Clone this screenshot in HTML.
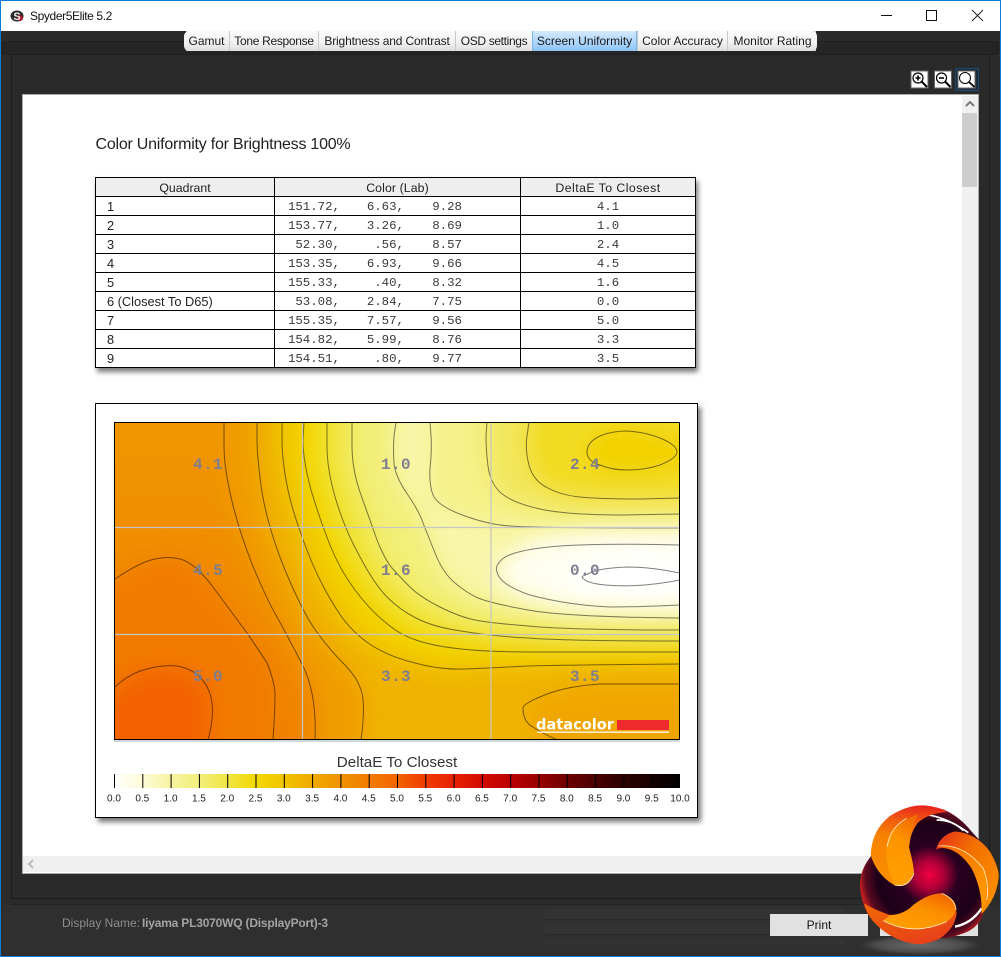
<!DOCTYPE html>
<html><head><meta charset="utf-8"><title>Spyder5Elite 5.2</title>
<style>
html,body{margin:0;padding:0}
body{width:1001px;height:957px;position:relative;overflow:hidden;background:#2b2b2b;font-family:"Liberation Sans",sans-serif;color:#111}
.a{position:absolute}
.tab{position:absolute;top:31px;height:20px;line-height:20px;font-size:12px;text-align:center;background:linear-gradient(#fbfbfb,#f2f2f2 55%,#dedede);color:#1a1a1a;box-sizing:border-box;white-space:nowrap}
table{position:absolute;left:95px;top:177px;width:600px;border-collapse:collapse;table-layout:fixed;background:#fff;box-shadow:2px 4px 5px #777;font-size:12px}
td,th{border:1px solid #000;height:16px;padding:2px 0 0 0;line-height:16px;font-weight:normal;color:#222}
th{background:#eee;text-align:center;font-size:12.300px}
td.q{padding-left:11px;font-size:12.800px}
td.m,td.d{font-family:"Liberation Mono",monospace;font-size:12.400px;color:#3a3a3a}
td.d{text-align:center}
td.m b{display:inline-block;font-weight:normal;text-align:right;white-space:pre}
td.m b:nth-child(1){width:65px}
td.m b:nth-child(2){width:64px}
td.m b:nth-child(3){width:58px}
</style></head><body>

<!-- title bar -->
<div class="a" style="left:0;top:0;width:1001px;height:31px;background:#fff"></div>
<svg class="a" style="left:9px;top:8px" width="16" height="16" viewBox="0 0 16 16"><ellipse cx="8" cy="8" rx="6.500" ry="5.500" fill="#2a2a2a"/><circle cx="11" cy="10" r="3" fill="#a01525"/><text x="8" y="12" font-size="11" font-weight="bold" fill="#eee" text-anchor="middle" font-family="Liberation Sans">S</text></svg>
<div class="a" style="left:30px;top:8px;font-size:12px;line-height:16px;color:#111;letter-spacing:-.38px">Spyder5Elite 5.2</div>
<svg class="a" style="left:870px;top:0" width="131" height="31"><path d="M11 15.500H22" stroke="#111" fill="none"/><rect x="56.500" y="10.500" width="10" height="10" stroke="#111" fill="none"/><path d="M102 10L113 21M113 10L102 21" stroke="#222" fill="none"/></svg>

<!-- dark frame -->
<div class="a" style="left:2px;top:41px;width:997px;height:14px;background:#252525;border:1px solid #1f1f1f;border-radius:3px;box-sizing:border-box"></div>
<div class="a" style="left:11px;top:55px;width:979px;height:844px;border:1px solid #1c1c1c;border-top:0;box-sizing:border-box;background:#2a2a2a"></div>
<div class="a" style="left:11px;top:899px;width:979px;height:6px;border-bottom:1px solid #222;box-sizing:border-box"></div>
<div class="a" style="left:0;top:905px;width:1001px;height:52px;background:#2f2f2f"></div>
<div class="a" style="left:545px;top:909px;width:300px;height:35px;background:repeating-linear-gradient(#333 0 10px,#292929 10px 11px,#2f2f2f 11px 15px)"></div>

<!-- tabs -->
<div class="a" style="left:186px;top:31px;width:630px;height:20px;background:#c9c9c9"></div>
<div class="tab" style="left:184px;width:45px;border-radius:5px 0 0 5px">Gamut</div>
<div class="tab" style="left:230px;width:88px;letter-spacing:-.3px">Tone Response</div>
<div class="tab" style="left:319px;width:136px;letter-spacing:-.15px">Brightness and Contrast</div>
<div class="tab" style="left:456px;width:76px;letter-spacing:-.35px">OSD settings</div>
<div class="tab" style="left:532px;width:105px;background:linear-gradient(#d5e9fd,#aed6fb 55%,#8ec4f7);border-left:1px solid #7ab5ee;border-right:1px solid #7ab5ee">Screen Uniformity</div>
<div class="tab" style="left:638px;width:89px">Color Accuracy</div>
<div class="tab" style="left:728px;width:89px;border-radius:0 5px 5px 0">Monitor Rating</div>

<!-- zoom buttons -->
<div class="a" style="left:955px;top:68px;width:24px;height:23px;border:1px solid #1b4a72;box-sizing:border-box;background:#1f2d3a"></div>
<svg class="a" style="left:910px;top:70px" width="70" height="20">
<g fill="#fff" stroke="#666"><rect x="1" y="1" width="17" height="17"/><rect x="24.500" y="1" width="17" height="17"/><rect x="48" y="1" width="17" height="17"/></g>
<g fill="none" stroke="#000" stroke-width="1.200"><circle cx="8" cy="8" r="5"/><path d="M11.500 11.500L17 17" stroke-width="2"/><path d="M5.500 8H10.500M8 5.500V10.500" stroke-width="1.600"/>
<circle cx="31.500" cy="8" r="5"/><path d="M35 11.500L40.500 17" stroke-width="2"/><path d="M29 8H34" stroke-width="1.600"/>
<circle cx="55" cy="8" r="5.500" stroke-width="1"/><path d="M59 12L64.500 17" stroke-width="1.800"/></g></svg>

<!-- content box -->
<div class="a" style="left:22px;top:94px;width:957px;height:780px;background:#fff;border:1px solid #aaa;box-sizing:border-box"></div>
<div class="a" style="left:962px;top:96px;width:16px;height:760px;background:#f0f0f0"></div>
<div class="a" style="left:962px;top:113px;width:15px;height:74px;background:#cdcdcd"></div>
<svg class="a" style="left:962px;top:98px" width="16" height="12"><path d="M4 8L8 4L12 8" fill="none" stroke="#7a7a7a" stroke-width="2"/></svg>
<div class="a" style="left:23px;top:856px;width:955px;height:16px;background:#f0f0f0"></div>
<svg class="a" style="left:26px;top:858px" width="12" height="12"><path d="M7 2L3 6L7 10" fill="none" stroke="#bdbdbd" stroke-width="2"/></svg>

<div class="a" style="left:95.500px;top:135px;font-size:16px;line-height:19px;color:#222;letter-spacing:-.23px;white-space:nowrap">Color Uniformity for Brightness 100%</div>

<table>
<colgroup><col style="width:179px"><col style="width:246px"><col style="width:175px"></colgroup>
<tr><th>Quadrant</th><th style="letter-spacing:.1px">Color (Lab)</th><th style="letter-spacing:.45px">DeltaE To Closest</th></tr>
<tr><td class="q">1</td><td class="m"><b>151.72,</b><b>6.63,</b><b>9.28</b></td><td class="d">4.1</td></tr>
<tr><td class="q">2</td><td class="m"><b>153.77,</b><b>3.26,</b><b>8.69</b></td><td class="d">1.0</td></tr>
<tr><td class="q">3</td><td class="m"><b>52.30,</b><b>.56,</b><b>8.57</b></td><td class="d">2.4</td></tr>
<tr><td class="q">4</td><td class="m"><b>153.35,</b><b>6.93,</b><b>9.66</b></td><td class="d">4.5</td></tr>
<tr><td class="q">5</td><td class="m"><b>155.33,</b><b>.40,</b><b>8.32</b></td><td class="d">1.6</td></tr>
<tr><td class="q">6 (Closest To D65)</td><td class="m"><b>53.08,</b><b>2.84,</b><b>7.75</b></td><td class="d">0.0</td></tr>
<tr><td class="q">7</td><td class="m"><b>155.35,</b><b>7.57,</b><b>9.56</b></td><td class="d">5.0</td></tr>
<tr><td class="q">8</td><td class="m"><b>154.82,</b><b>5.99,</b><b>8.76</b></td><td class="d">3.3</td></tr>
<tr><td class="q">9</td><td class="m"><b>154.51,</b><b>.80,</b><b>9.77</b></td><td class="d">3.5</td></tr>
</table>

<!-- chart box -->
<div class="a" style="left:95px;top:403px;width:603px;height:415px;background:#fff;border:1px solid #000;box-sizing:border-box;box-shadow:3px 4px 5px #777"></div>

<svg class="a" style="left:0;top:0" width="1001" height="957" viewBox="0 0 1001 957">
<defs>
<clipPath id="pl"><rect x="114" y="422" width="566" height="318"/></clipPath>
<filter id="bl" x="-20%" y="-20%" width="140%" height="140%"><feGaussianBlur stdDeviation="11"/></filter>
<linearGradient id="cb"><stop offset="0" stop-color="#fff"/><stop offset=".05" stop-color="#fdfbd8"/><stop offset=".1" stop-color="#f6f4a0"/><stop offset=".15" stop-color="#f3ef7c"/><stop offset=".2" stop-color="#f0e545"/><stop offset=".25" stop-color="#f2d900"/><stop offset=".3" stop-color="#f2c400"/><stop offset=".35" stop-color="#f0aa00"/><stop offset=".4" stop-color="#ef9200"/><stop offset=".45" stop-color="#f27c00"/><stop offset=".5" stop-color="#f26400"/><stop offset=".55" stop-color="#f03c00"/><stop offset=".6" stop-color="#e62000"/><stop offset=".65" stop-color="#d40c00"/><stop offset=".7" stop-color="#bb0000"/><stop offset=".75" stop-color="#9a0000"/><stop offset=".8" stop-color="#6e0000"/><stop offset=".85" stop-color="#4a0000"/><stop offset=".9" stop-color="#2d0000"/><stop offset=".95" stop-color="#170000"/><stop offset="1" stop-color="#000"/></linearGradient>
<linearGradient id="bg0" x1="0" y1="0" x2="0" y2="1"><stop offset="0" stop-color="#f09800"/><stop offset="1" stop-color="#f08000"/></linearGradient>
</defs>
<g clip-path="url(#pl)">
<g filter="url(#bl)">
<rect x="60" y="370" width="680" height="420" fill="url(#bg0)"/>
<polygon points="60,610 115,579 140,562 168,557 190,563 213,587 247,633 267,663 275,693 273,800 60,800" fill="#f27a00"/>
<polygon points="60,730 115,687 133,672 168,666 197,673 212,697 212,720 208,800 60,800" fill="#f26400"/>
<polygon points="224,370 224,467 238,528 267,600 287,635 317,693 315,800 740,800 740,370" fill="#f09c00"/>
<polygon points="257,370 257,457 268,528 303,613 330,650 357,677 366,703 361,800 740,800 740,370" fill="#f0b400"/>
<polygon points="740,684 600,684 550,693 523,708 533,727 558,800 740,800" fill="#f0a600"/>
<polygon points="282,370 282,457 290,503 310,560 330,600 353,633 390,657 440,670 490,668 567,665 740,664 740,370" fill="#f2cc00"/>
<polygon points="304,370 303,460 320,520 340,570 370,610 400,635 433,646 490,652 567,652 740,652 740,370" fill="#f2da00"/>
<polygon points="327,370 327,470 345,530 375,585 400,610 433,627 490,636 567,641 740,641 740,370" fill="#f0e640"/>
<polygon points="352,370 352,470 370,520 385,560 400,577 420,597 460,617 490,623 567,630 740,630 740,370" fill="#f3ef78"/>
<polygon points="396,370 393,450 396,478 420,513 427,533 443,573 467,593 490,603 567,617 740,618 740,370" fill="#f8f6a8"/>
<polygon points="430,370 432,450 429,487 440,507 490,525 533,528 740,528 740,370" fill="#f6f188"/>
<polygon points="487,370 486,450 490,483 513,503 567,515 740,514 740,370" fill="#f2e75c"/>
<polygon points="529,370 525,450 533,480 560,495 600,499 740,498 740,370" fill="#f2dc20"/>
<polygon points="580,452 600,428 627,424 660,432 740,452 660,472 627,476 600,472" fill="#f2d200"/>
<polygon points="740,532 600,532 533,540 497,567 510,592 567,607 633,610 740,608" fill="#fffef0"/>
<polygon points="740,552 627,550 585,558 555,577 590,594 633,597 740,594" fill="#fff"/>
</g>
<g fill="none" stroke="#000" stroke-opacity=".5" stroke-width="1">
<path d="M224 422L224 445Q224 467 231 497Q238 528 252 564Q267 600 277 617Q287 635 302 664Q317 693 315 740"/>
<path d="M257 422L257 440Q257 457 262 492Q268 528 285 570Q303 613 316 631Q330 650 343 663Q357 677 361 690Q366 703 361 740"/>
<path d="M282 422L282 440Q282 457 286 480Q290 503 300 531Q310 560 320 580Q330 600 341 616Q353 633 371 645Q390 657 415 663Q440 670 465 669Q490 668 528 666Q567 665 680 664"/>
<path d="M304 422L303 441Q303 460 311 490Q320 520 330 545Q340 570 355 590Q370 610 385 622Q400 635 416 640Q433 646 461 649Q490 652 528 652L680 652"/>
<path d="M327 422L327 446Q327 470 336 500Q345 530 360 557Q375 585 387 597Q400 610 416 618Q433 627 461 631Q490 636 528 638Q567 641 680 641"/>
<path d="M352 422L352 446Q352 470 361 495Q370 520 377 540Q385 560 392 568Q400 577 410 587Q420 597 440 607Q460 617 475 620Q490 623 528 626Q567 630 680 630"/>
<path d="M396 422L394 436Q393 450 394 464Q396 478 408 495Q420 513 423 523Q427 533 435 553Q443 573 455 583Q467 593 478 598Q490 603 528 610Q567 617 680 618"/>
<path d="M430 422L431 436Q432 450 430 468Q429 487 434 497Q440 507 465 516Q490 525 511 526Q533 528 680 528"/>
<path d="M487 422L486 436Q486 450 488 466Q490 483 501 493Q513 503 540 509Q567 515 623 515L680 514"/>
<path d="M529 422L527 436Q525 450 529 465Q533 480 546 487Q560 495 580 497Q600 499 640 499L680 498"/>
<path d="M587 452Q587 442 600 436Q612 431 627 431Q645 432 660 438Q677 445 677 452Q677 458 660 465Q645 470 627 470Q612 470 600 465Q587 461 587 452Z"/>
<path d="M680 545Q600 543 560 546Q520 549 505 557Q494 565 497 572Q500 585 530 595Q567 605 610 607Q640 607 680 605"/>
<path d="M680 573Q650 567 627 567Q605 568 595 571Q582 576 582 577Q585 583 605 585Q640 588 680 580"/>
<path d="M680 684L600 684Q570 686 550 693Q523 703 523 708Q523 722 533 727Q545 735 558 740"/>
<path d="M115 579Q140 562 155 559Q168 556 180 559Q195 563 213 587Q230 610 247 633Q262 655 267 663Q274 680 275 693Q275 710 273 740"/>
<path d="M115 687Q125 677 140 671Q168 662 185 668Q205 675 211 697Q215 715 208 740"/>
</g>
<g stroke="#c6c6c6" stroke-width="1.200" fill="none"><path d="M302.500 422V740M491 422V740M114 527.500H680M114 634.500H680"/></g>
<g font-family="Liberation Mono" font-weight="bold" font-size="16" fill="#7e7e90" text-anchor="middle" letter-spacing=".4">
<text x="208" y="469">4.1</text><text x="396" y="469">1.0</text><text x="585" y="469">2.4</text>
<text x="208" y="575">4.5</text><text x="396" y="575">1.6</text><text x="585" y="575">0.0</text>
<text x="208" y="681">5.0</text><text x="396" y="681">3.3</text><text x="585" y="681">3.5</text>
</g>
<rect x="617" y="720" width="52" height="10" fill="#ee2a2e"/>
<rect x="537" y="731.500" width="132" height="1.300" fill="#fff"/>
<text x="536" y="729.500" font-family="DejaVu Sans" font-weight="bold" font-size="15.500" fill="#fff" textLength="78" lengthAdjust="spacingAndGlyphs">datacolor</text>
</g>
<rect x="114.500" y="422.500" width="565" height="317" fill="none" stroke="#000"/>
<path d="M114 741H680" stroke="#a9aeb8"/>

<text x="397" y="767" font-size="15.200" fill="#333" text-anchor="middle" font-family="Liberation Sans">DeltaE To Closest</text>
<rect x="114" y="774" width="566" height="14" fill="url(#cb)"/>
<g stroke="#000" stroke-width="1"><path d="M114.500 774V788M142.800 774V788M171.100 774V788M199.400 774V788M227.700 774V788M256 774V788M284.300 774V788M312.600 774V788M340.900 774V788M369.200 774V788M397.500 774V788M425.800 774V788M454.100 774V788M482.400 774V788M510.700 774V788M539 774V788M567.300 774V788M595.600 774V788M623.900 774V788M652.200 774V788"/></g>
<g font-family="Liberation Sans" font-size="10" fill="#222" text-anchor="middle">
<text x="114" y="801.500">0.0</text><text x="142.300" y="801.500">0.5</text><text x="170.600" y="801.500">1.0</text><text x="198.900" y="801.500">1.5</text><text x="227.200" y="801.500">2.0</text><text x="255.500" y="801.500">2.5</text><text x="283.800" y="801.500">3.0</text><text x="312.100" y="801.500">3.5</text><text x="340.400" y="801.500">4.0</text><text x="368.700" y="801.500">4.5</text><text x="397" y="801.500">5.0</text><text x="425.300" y="801.500">5.5</text><text x="453.600" y="801.500">6.0</text><text x="481.900" y="801.500">6.5</text><text x="510.200" y="801.500">7.0</text><text x="538.500" y="801.500">7.5</text><text x="566.800" y="801.500">8.0</text><text x="595.100" y="801.500">8.5</text><text x="623.400" y="801.500">9.0</text><text x="651.700" y="801.500">9.5</text><text x="680" y="801.500">10.0</text>
</g>
</svg>

<!-- bottom bar -->
<div class="a" style="left:62px;top:915px;font-size:12px;line-height:16px;color:#8d8d8d;white-space:nowrap">Display Name:</div>
<div class="a" style="left:142px;top:915px;font-size:12px;line-height:16px;font-weight:bold;color:#a3a3a3;white-space:nowrap;letter-spacing:-.2px">Iiyama PL3070WQ (DisplayPort)-3</div>
<div class="a" style="left:770px;top:914px;width:98px;height:22px;background:#e1e1e1;text-align:center;font-size:12px;line-height:22px;color:#111">Print</div>
<div class="a" style="left:880px;top:914px;width:98px;height:22px;background:#e1e1e1"></div>

<!-- window border -->
<div class="a" style="left:0;top:0;width:1001px;height:957px;border:1px solid #0f7ad8;box-sizing:border-box"></div>

<!-- logo -->
<svg class="a" style="left:840px;top:790px" width="161" height="167" viewBox="0 0 483 501">
<defs>
<radialGradient id="sh"><stop offset="0" stop-color="#6a6a6a"/><stop offset=".7" stop-color="#4c4c4c"/><stop offset="1" stop-color="#444" stop-opacity="0"/></radialGradient>
<radialGradient id="dk" gradientUnits="userSpaceOnUse" cx="268" cy="255" r="208"><stop offset="0" stop-color="#f00040"/><stop offset=".2" stop-color="#b00038"/><stop offset=".42" stop-color="#2a0020"/><stop offset=".75" stop-color="#1c0018"/><stop offset=".92" stop-color="#5a0a20"/><stop offset="1" stop-color="#b81c1c"/></radialGradient>
<linearGradient id="o1" x1=".5" y1="0" x2=".4" y2="1"><stop offset="0" stop-color="#e8281e"/><stop offset=".18" stop-color="#ef5a10"/><stop offset=".4" stop-color="#f78200"/><stop offset="1" stop-color="#fb9000"/></linearGradient>
<linearGradient id="o1b" x1=".7" y1="0" x2=".4" y2="1"><stop offset="0" stop-color="#f26a00"/><stop offset=".4" stop-color="#fd9400"/><stop offset="1" stop-color="#ffa000"/></linearGradient>
<linearGradient id="o2" x1="0" y1="0" x2="1" y2=".8"><stop offset="0" stop-color="#e62c1c"/><stop offset=".45" stop-color="#f27000"/><stop offset="1" stop-color="#fd9000"/></linearGradient>
<linearGradient id="o2b" x1="0" y1="0" x2="1" y2="1"><stop offset="0" stop-color="#f56a00"/><stop offset="1" stop-color="#ffa000"/></linearGradient>
<linearGradient id="o3" x1=".1" y1="0" x2=".6" y2="1"><stop offset="0" stop-color="#f07000"/><stop offset="1" stop-color="#e8401a"/></linearGradient>
<linearGradient id="o3b" x1=".9" y1="0" x2=".2" y2="1"><stop offset="0" stop-color="#f26200"/><stop offset=".45" stop-color="#fc9000"/><stop offset="1" stop-color="#ffa000"/></linearGradient>
</defs>
<ellipse cx="240" cy="465" rx="185" ry="30" fill="url(#sh)"/>
<path d="M92 200Q60 240 60 285Q62 350 100 395L225 462L300 445Q330 445 370 430Q415 415 430 370L470 300L450 185L395 125Q360 80 310 58L250 46L150 78Z" fill="url(#dk)"/>
<path d="M240 72Q310 75 385 128M290 90Q340 90 370 122" fill="none" stroke="#fff" stroke-width="5"/>
<path d="M345 410Q395 400 425 355" fill="none" stroke="#fff" stroke-width="7"/>
<path d="M165 287Q110 255 92 195Q95 120 150 78Q200 45 250 46Q300 50 322 66Q262 70 232 100Q208 135 207 172Q222 230 222 250Q205 295 165 287Z" fill="url(#o1)"/>
<path d="M165 285Q130 215 142 160Q160 100 235 72Q215 110 207 172Q222 230 222 250Q205 295 165 285Z" fill="url(#o1b)"/>
<path d="M288 178Q300 135 345 124Q410 130 450 185Q478 235 476 262Q470 325 425 372Q428 300 395 235Q365 190 330 178Q305 170 288 178Z" fill="url(#o2)"/>
<path d="M295 168Q370 160 430 235Q450 290 425 372Q428 300 395 235Q365 190 330 178Q305 170 295 168Z" fill="url(#o2b)"/>
<path d="M72 340Q105 360 150 375Q190 375 220 345Q265 310 305 310Q345 325 350 370Q345 415 300 445Q260 465 225 462Q150 450 100 395Q80 370 72 340Z" fill="url(#o3)"/>
<path d="M130 392Q220 440 320 395Q350 375 348 350Q345 325 305 310Q265 310 220 345Q190 375 150 375Z" fill="url(#o3b)"/>
<g fill="none" stroke="#ffeec0" stroke-width="2.500"><path d="M165 285Q205 295 222 250M142 170Q148 115 200 85"/><path d="M295 168Q370 160 430 235Q450 290 440 330"/><path d="M130 392Q220 440 320 395M305 310Q345 325 348 360"/></g>
</svg>
</body></html>
